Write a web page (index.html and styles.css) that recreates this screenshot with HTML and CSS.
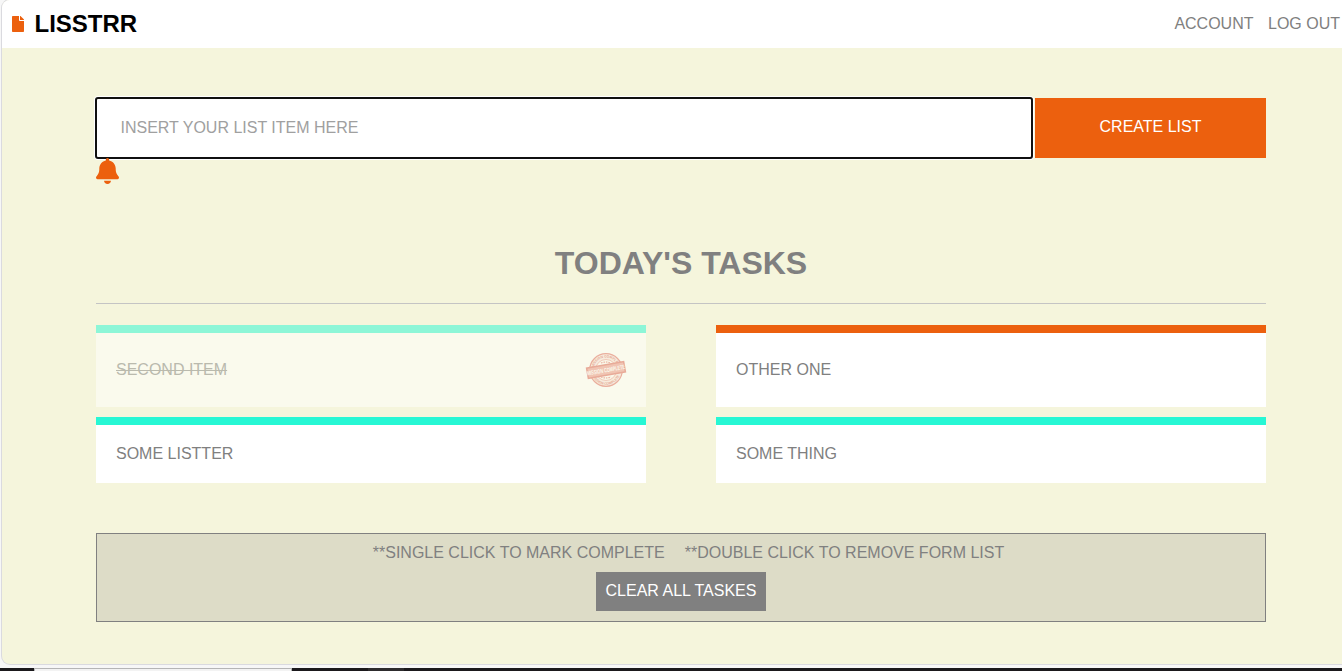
FILE: index.html
```html
<!DOCTYPE html>
<html lang="en">
<head>
<meta charset="utf-8">
<title>Lisstrr</title>
<link rel="stylesheet" href="styles.css">
</head>
<body>
<div class="window">
  <header class="navbar">
    <div class="brand">
      <svg class="brand-icon" viewBox="0 0 384 512"><path d="M224 136V0H24C10.700 0 0 10.700 0 24v464c0 13.300 10.700 24 24 24h336c13.300 0 24-10.700 24-24V160H248c-13.200 0-24-10.800-24-24zm160-14.100v6.100H256V0h6.100c6.400 0 12.500 2.500 17 7l97.900 98c4.500 4.500 7 10.600 7 16.900z"/></svg>
      <span>LISSTRR</span>
    </div>
    <nav class="links"><a>ACCOUNT</a><a>LOG OUT</a></nav>
  </header>
  <main class="content">
    <form class="create">
      <input class="item-input" type="text" placeholder="INSERT YOUR LIST ITEM HERE">
      <button class="create-button" type="button">CREATE LIST</button>
    </form>
    <svg class="bell" viewBox="0 0 448 512" preserveAspectRatio="none"><path d="M224 0c-17.700 0-32 14.300-32 32V51.200C119 66 64 130.600 64 208v18.800c0 47-17.300 92.400-48.500 127.600l-7.400 8.300c-8.400 9.400-10.400 22.900-5.300 34.400S19.400 416 32 416H416c12.600 0 24-7.400 29.200-18.900s3.100-25-5.300-34.400l-7.400-8.300C401.300 319.200 384 273.900 384 226.800V208c0-77.400-55-142-128-156.800V32c0-17.700-14.300-32-32-32zm67 448H157c0 17 6.700 33.300 18.700 45.300s31.300 18.700 48.300 18.700 36.300-6.700 48.300-18.700S291 465 291 448z"/></svg>
    <h1 class="title">TODAY'S TASKS</h1>
    <section class="tasks">
      <article class="task done">
        <span class="label">SECOND ITEM</span>
        <svg class="stamp" viewBox="0 0 40 40">
          <defs>
            <path id="arc-top" d="M7.500 20a12.500 12.500 0 0 1 25 0"/>
            <path id="arc-bottom" d="M5.200 20a14.800 14.800 0 0 0 29.600 0"/>
          </defs>
          <circle class="ring" cx="20" cy="20" r="16.300"/>
          <circle class="ring thin" cx="20" cy="20" r="10.500"/>
          <text class="arc-text"><textPath href="#arc-top" startOffset="50%">MISSION COMPLETE</textPath></text>
          <text class="arc-text"><textPath href="#arc-bottom" startOffset="50%">MISSION COMPLETE</textPath></text>
          <path class="ring dots" d="M15 13q5-2 10 0M15 27q5 2 10 0"/>
          <g transform="rotate(-10 20 20)">
            <rect class="band" x="1.200" y="14.800" width="37.600" height="10.400"/>
            <text class="band-text" transform="translate(20 22.300) scale(.62 1)">MISSION COMPLETE</text>
          </g>
        </svg>
      </article>
      <article class="task urgent"><span class="label">OTHER ONE</span></article>
      <article class="task"><span class="label">SOME LISTTER</span></article>
      <article class="task"><span class="label">SOME THING</span></article>
    </section>
    <section class="help">
      <div class="hints"><span>**SINGLE CLICK TO MARK COMPLETE</span><span>**DOUBLE CLICK TO REMOVE FORM LIST</span></div>
      <button class="clear-button" type="button">CLEAR ALL TASKES</button>
    </section>
  </main>
</div>
<div class="taskbar"><div class="taskbar-search"></div><div class="taskbar-item"></div></div>
</body>
</html>
```
FILE: styles.css
```css
* { box-sizing: border-box; }
body {
  margin: 0;
  height: 671px;
  overflow: hidden;
  display: flex;
  flex-direction: column;
  background: #f7f7f7;
  font: 16px/18px "Liberation Sans", Arial, sans-serif;
  color: gray;
}
button, input { font: inherit; border: 0; border-radius: 0; }
.window {
  height: 664px;
  margin-left: 2px;
  background: #f5f5dc;
  border-radius: 8px 0 0 8px;
  box-shadow: 0 0 0 1px #dadadf;
  overflow: hidden;
}
.navbar {
  height: 48px;
  padding: 0 2px 0 10px;
  background: #fff;
  display: flex;
  align-items: center;
  justify-content: space-between;
}
.brand { display: flex; align-items: center; gap: 10.5px; color: #000; font-size: 24px; font-weight: bold; }
.brand-icon { width: 12px; height: 16px; fill: #ec600e; }
.links { display: flex; gap: 14.5px; padding-bottom: 1px; }
.content { padding: 50px 76px 0 94px; }
.create { display: flex; gap: 3px; height: 60px; }
.item-input {
  width: 936px;
  padding: 0 24.5px 1px;
  background: #fff;
  outline: 2px solid #101010;
  outline-offset: -1px;
  border-radius: 2px;
  box-shadow: 0 0 0 2px #fff;
}
.item-input::placeholder { color: #a0a0a0; opacity: 1; }
.create-button { flex: 1; padding: 0 0 2px; background: #ec600e; color: #fff; }
.bell { position: relative; display: block; width: 23px; height: 26px; fill: #ec600e; }
.title {
  height: 120px;
  margin: 0;
  padding-top: 61px;
  border-bottom: 1px solid #c4c4c4;
  font-size: 32px;
  line-height: 37px;
  text-align: center;
}
.tasks {
  margin-top: 21px;
  display: grid;
  grid-template-columns: 550px 550px;
  grid-template-rows: 82px 66px;
  gap: 10px 70px;
}
.task {
  padding: 0 20px;
  background: #fff;
  border-top: 8px solid #27f7d4;
  display: flex;
  align-items: center;
  justify-content: space-between;
}
.task .label { padding-bottom: 1px; }
.task.urgent { border-color: #ec600e; }
.task.done { opacity: .5; }
.done .label { text-decoration: line-through; }
.stamp { width: 40px; height: 40px; overflow: visible; }
.ring { fill: #fae3dd; stroke: #e0695f; stroke-width: 1.2; }
.thin { fill: #fffaf7; stroke-width: .6; }
.dots { fill: none; stroke-dasharray: 1.5 1; }
.arc-text { font-size: 3.4px; font-weight: bold; fill: #d5574c; text-anchor: middle; }
.band { fill: #ec948a; stroke: #dc6256; stroke-width: 1.5; }
.band-text { font-size: 6.2px; font-weight: bold; fill: #fff; text-anchor: middle; }
.help {
  height: 89px;
  margin-top: 50px;
  padding-top: 10px;
  background: #dddcc7;
  border: 1px solid gray;
  display: flex;
  flex-direction: column;
  align-items: center;
  gap: 10px;
}
.hints { display: flex; gap: 20px; padding-left: 15px; }
.clear-button { width: 170px; height: 39px; padding: 0 0 2px; background: gray; color: #fff; }
.taskbar { height: 3px; margin-top: 4px; background: #1b191c; display: flex; }
.taskbar-search { width: 258px; margin-left: 34px; background: #f3f3f3; border: 1px solid #b5b5b5; border-bottom: 0; }
.taskbar-item { width: 36px; margin-left: 76px; background: #2d2b2d; }
```
